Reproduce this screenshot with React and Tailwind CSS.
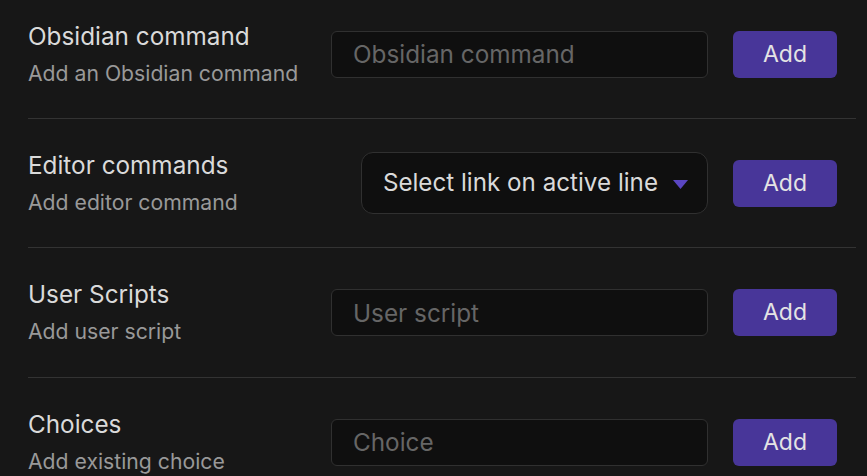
import { useState } from 'react';

// ── rows ─────────────────────────────────────────────────────────────────────

const rows = [
  { name: 'Obsidian command', desc: 'Add an Obsidian command', kind: 'input', placeholder: 'Obsidian command' },
  { name: 'Editor commands', desc: 'Add editor command', kind: 'select', value: 'Select link on active line' },
  { name: 'User Scripts', desc: 'Add user script', kind: 'input', placeholder: 'User script', tall: true },
  { name: 'Choices', desc: 'Add existing choice', kind: 'input', placeholder: 'Choice' },
];

function Dropdown({ value }) {
  return (
    <div className="flex items-center h-[62px] pl-[21px] pr-[19px] rounded-[12px] border border-[#303030] bg-[#0f0f0f] text-[#dadada] text-[24.2px]">
      <span>{value}</span>
      <svg width="15" height="9" viewBox="0 0 15 9" className="ml-[15px] mt-[2px]">
        <path d="M0 0 H15 L7.5 9 Z" fill="#5a46c2" />
      </svg>
    </div>
  );
}

function TextInput({ placeholder }) {
  const [val, setVal] = useState('');
  return (
    <input
      value={val}
      onChange={e => setVal(e.target.value)}
      placeholder={placeholder}
      className="w-[377px] h-[47px] px-[21px] rounded-[6px] border border-[#303030] bg-[#0f0f0f] text-[#dadada] text-[24.3px] placeholder:text-[#666666] outline-none"
    />
  );
}

function SettingRow({ row, first }) {
  return (
    <div className={clsxRow(first, row.tall)}>
      <div className="flex-1 min-w-0 flex flex-col gap-[8px]">
        <div className="text-[#dadada] text-[24.3px] leading-[30px] -mt-[1px]">{row.name}</div>
        <div className="text-[#999999] text-[21.2px] leading-[28px]">{row.desc}</div>
      </div>
      <div className="flex items-center gap-[25px]">
        {row.kind === 'select'
          ? <Dropdown value={row.value} />
          : <TextInput placeholder={row.placeholder} />}
        <button className="w-[104px] h-[47px] rounded-[6px] bg-[#483699] text-[#e4e4e4] text-[23px]">
          Add
        </button>
      </div>
    </div>
  );
}

function clsxRow(first, tall) {
  if (first) return 'flex items-center h-[128px] pr-[19px]';
  if (tall) return 'flex items-center h-[130px] pr-[19px] border-t border-[#333333]';
  return 'flex items-center h-[129px] pr-[19px] border-t border-[#333333]';
}

// ── page ─────────────────────────────────────────────────────────────────────

export default function App() {
  return (
    <div className="w-[867px] h-[476px] overflow-hidden bg-[#171717]" style={{ fontFamily: 'Inter, "Noto Sans", sans-serif' }}>
      <div className="mt-[-10px] ml-[28px] mr-[11px]">
        {rows.map((r, i) => (
          <SettingRow key={r.name} row={r} first={i === 0} />
        ))}
      </div>
    </div>
  );
}
